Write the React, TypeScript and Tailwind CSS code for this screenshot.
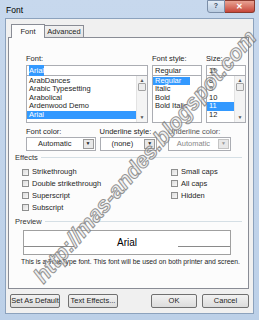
import React from "react";

const fonts = ["ArabDances", "Arabic Typesetting", "Arabolical", "Ardenwood Demo", "Arial"];
const styles = ["Regular", "Italic", "Bold", "Bold Italic"];
const sizes = ["8", "9", "10", "11", "12"];

const Scrollbar = () => (
    <div className="flex w-[11px] shrink-0 flex-col items-center justify-between border-l border-[#e3e3e3] bg-[#f4f4f4] py-[2px]">
        <span className="text-[5px] leading-none text-[#555]">▲</span>
        <div className="h-[8px] w-[8px] rounded-[1px] border border-[#a3a3a3] bg-[#ececec]" />
        <div className="flex-1" />
        <span className="text-[5px] leading-none text-[#555]">▼</span>
    </div>
);

const ListBox = ({ items, selected, scroll, width }: { items: string[]; selected: number; scroll?: boolean; width: string }) => (
    <div className={`flex flex-col ${width}`}>
        <div className="flex h-[11px] items-center border border-[#abadb3] bg-white px-[2px]">
            {items === fonts ? (
                <span className="bg-[#3399ff] text-white">Arial</span>
            ) : (
                <span>{items === styles ? "Regular" : "11"}</span>
            )}
        </div>
        <div className="flex h-[47px] border border-t-0 border-[#abadb3] bg-white">
            <div className="flex flex-1 flex-col pt-[1px]">
                {items.map((item, i) => (
                    <div
                        key={item}
                        className={`h-[8.4px] px-[2px] leading-[8.4px] ${i === selected ? "bg-[#3399ff] text-white" : ""} ${scroll ? "" : "w-[37px]"}`}
                    >
                        {item}
                    </div>
                ))}
            </div>
            {scroll && <Scrollbar />}
        </div>
    </div>
);

const Select = ({ value, label, width, faded }: { value: string; label: string; width: string; faded?: boolean }) => (
    <div className={`flex flex-col ${width}`}>
        <span className={`leading-[10px] ${faded ? "text-[#555]" : ""}`}>{label}</span>
        <div className="flex h-[14px] items-center border border-[#abadb3] bg-white">
            <span className={`flex-1 text-center ${faded ? "text-[#888]" : ""}`}>{value}</span>
            <div className={`mr-[1px] flex h-[10px] w-[11px] items-center justify-center border bg-[#e8e8e8] text-[5px] ${faded ? "border-[#c4c4c4] text-[#999]" : "border-[#9a9a9a] text-[#222]"}`}>
                ▼
            </div>
        </div>
    </div>
);

const Check = ({ label }: { label: string }) => (
    <div className="flex h-[11.7px] items-center gap-[3px]">
        <div className="h-[7px] w-[7px] border border-[#8e8f8f] bg-gradient-to-br from-[#dcdcdc] to-[#f8f8f8]" />
        <span>{label}</span>
    </div>
);

const Group = ({ title }: { title: string }) => (
    <div className="flex items-center gap-[3px]">
        <span className="text-[#333]">{title}</span>
        <div className="h-px flex-1 bg-[#d5dfe5]" />
    </div>
);

const Btn = ({ children, width }: { children: React.ReactNode; width: string }) => (
    <div className={`flex h-[14px] items-center justify-center rounded-[2px] border border-[#707070] bg-gradient-to-b from-[#f2f2f2] to-[#dcdcdc] ${width}`}>
        {children}
    </div>
);

export default function App() {
    return (
        <div
            className="relative flex h-[320px] w-[259px] flex-col overflow-hidden bg-gradient-to-b from-[#c7d8ed] to-[#bcd0e8] text-[7.5px] text-[#1e1e1e]"
            style={{ fontFamily: '"Liberation Sans", Arial, sans-serif' }}
        >
            {/* title bar */}
            <div className="flex h-[18px] shrink-0 items-start justify-between pl-[6px] pr-[4px]">
                <span className="pt-[4px] text-[8.5px] text-black">Font</span>
                <div className="flex">
                    <div className="flex h-[13px] w-[18px] items-center justify-center rounded-bl-[3px] border border-[#7b8ea8] bg-gradient-to-b from-[#e3ecf6] to-[#b9cbe0] text-[7px] font-bold text-[#3a4a60]">
                        ?
                    </div>
                    <div className="flex h-[13px] w-[30px] items-center justify-center rounded-br-[3px] border border-l-0 border-[#8a3a2e] bg-gradient-to-b from-[#e8a293] to-[#c6453a] text-[8px] font-bold text-white">
                        ✕
                    </div>
                </div>
            </div>

            {/* client */}
            <div className="mx-[5px] mb-[6px] flex flex-1 flex-col border border-[#8ca2bd] bg-[#f0f0f0]">
                {/* tabs */}
                <div className="flex h-[18px] items-end pl-[5px] pt-[4px]">
                    <div className="relative z-10 -mb-px flex h-[14px] w-[34px] items-center justify-center border border-b-0 border-[#898c95] bg-[#fcfcfc]">
                        Font
                    </div>
                    <div className="flex h-[12px] w-[39px] items-center justify-center border border-b-0 border-l-0 border-[#898c95] bg-gradient-to-b from-[#f2f2f2] to-[#e3e3e3]">
                        Advanced
                    </div>
                </div>

                {/* panel */}
                <div className="ml-[2px] mr-[4px] flex h-[252px] flex-col border border-[#898c95] bg-[#fcfcfc] px-[17px] pt-[16px]">
                    <div className="flex gap-[4px]">
                        <div className="flex flex-col gap-[1px]">
                            <span className="leading-[10px]">Font:</span>
                            <ListBox items={fonts} selected={4} scroll width="w-[122px]" />
                        </div>
                        <div className="flex flex-col gap-[1px]">
                            <span className="leading-[10px]">Font style:</span>
                            <ListBox items={styles} selected={0} width="w-[50px]" />
                        </div>
                        <div className="flex flex-col gap-[1px]">
                            <span className="leading-[10px]">Size:</span>
                            <ListBox items={sizes} selected={3} scroll width="w-[40px]" />
                        </div>
                    </div>

                    <div className="mt-[4px] flex gap-[4px]">
                        <Select label="Font color:" value="Automatic" width="w-[75px]" />
                        <Select label="Underline style:" value="(none)" width="w-[62px]" />
                        <div className="w-[3px]" />
                        <Select label="Underline color:" value="Automatic" width="w-[68px]" faded />
                    </div>

                    <div className="-mx-[11px] mt-[1px]">
                        <Group title="Effects" />
                    </div>
                    <div className="-ml-[4px] mt-[3px] flex">
                        <div className="flex w-[149px] flex-col">
                            <Check label="Strikethrough" />
                            <Check label="Double strikethrough" />
                            <Check label="Superscript" />
                            <Check label="Subscript" />
                        </div>
                        <div className="flex flex-col">
                            <Check label="Small caps" />
                            <Check label="All caps" />
                            <Check label="Hidden" />
                        </div>
                    </div>

                    <div className="-mx-[11px] mt-[3px]">
                        <Group title="Preview" />
                    </div>
                    <div className="relative -ml-[3px] mt-[3px] flex h-[25px] items-center justify-center border border-[#a0a0a0] bg-white">
                        <span className="text-[10px] text-black">Arial</span>
                        <div className="absolute bottom-[7px] left-0 h-px w-[50px] bg-[#8a8a8a]" />
                        <div className="absolute bottom-[7px] right-0 h-px w-[52px] bg-[#8a8a8a]" />
                    </div>
                    <div className="-mx-[5px] mt-[2px] whitespace-nowrap text-[6.8px]">
                        This is a TrueType font. This font will be used on both printer and screen.
                    </div>
                </div>

                {/* buttons */}
                <div className="flex flex-1 items-center px-[4px]">
                    <Btn width="w-[50px]">Set As Default</Btn>
                    <div className="w-[8px]" />
                    <Btn width="w-[50px]">Text Effects...</Btn>
                    <div className="flex-1" />
                    <Btn width="w-[46px]">OK</Btn>
                    <div className="w-[5px]" />
                    <Btn width="w-[47px]">Cancel</Btn>
                </div>
            </div>

            {/* watermark */}
            <div className="pointer-events-none absolute left-[-25px] top-[140px] w-[340px] -rotate-[49deg] text-center text-[22px] font-bold italic text-[#e6e6e6]/70 [-webkit-text-stroke:1px_#7a7a7a] opacity-80">
                http://mas-andes.blogspot.com
            </div>
        </div>
    );
}
